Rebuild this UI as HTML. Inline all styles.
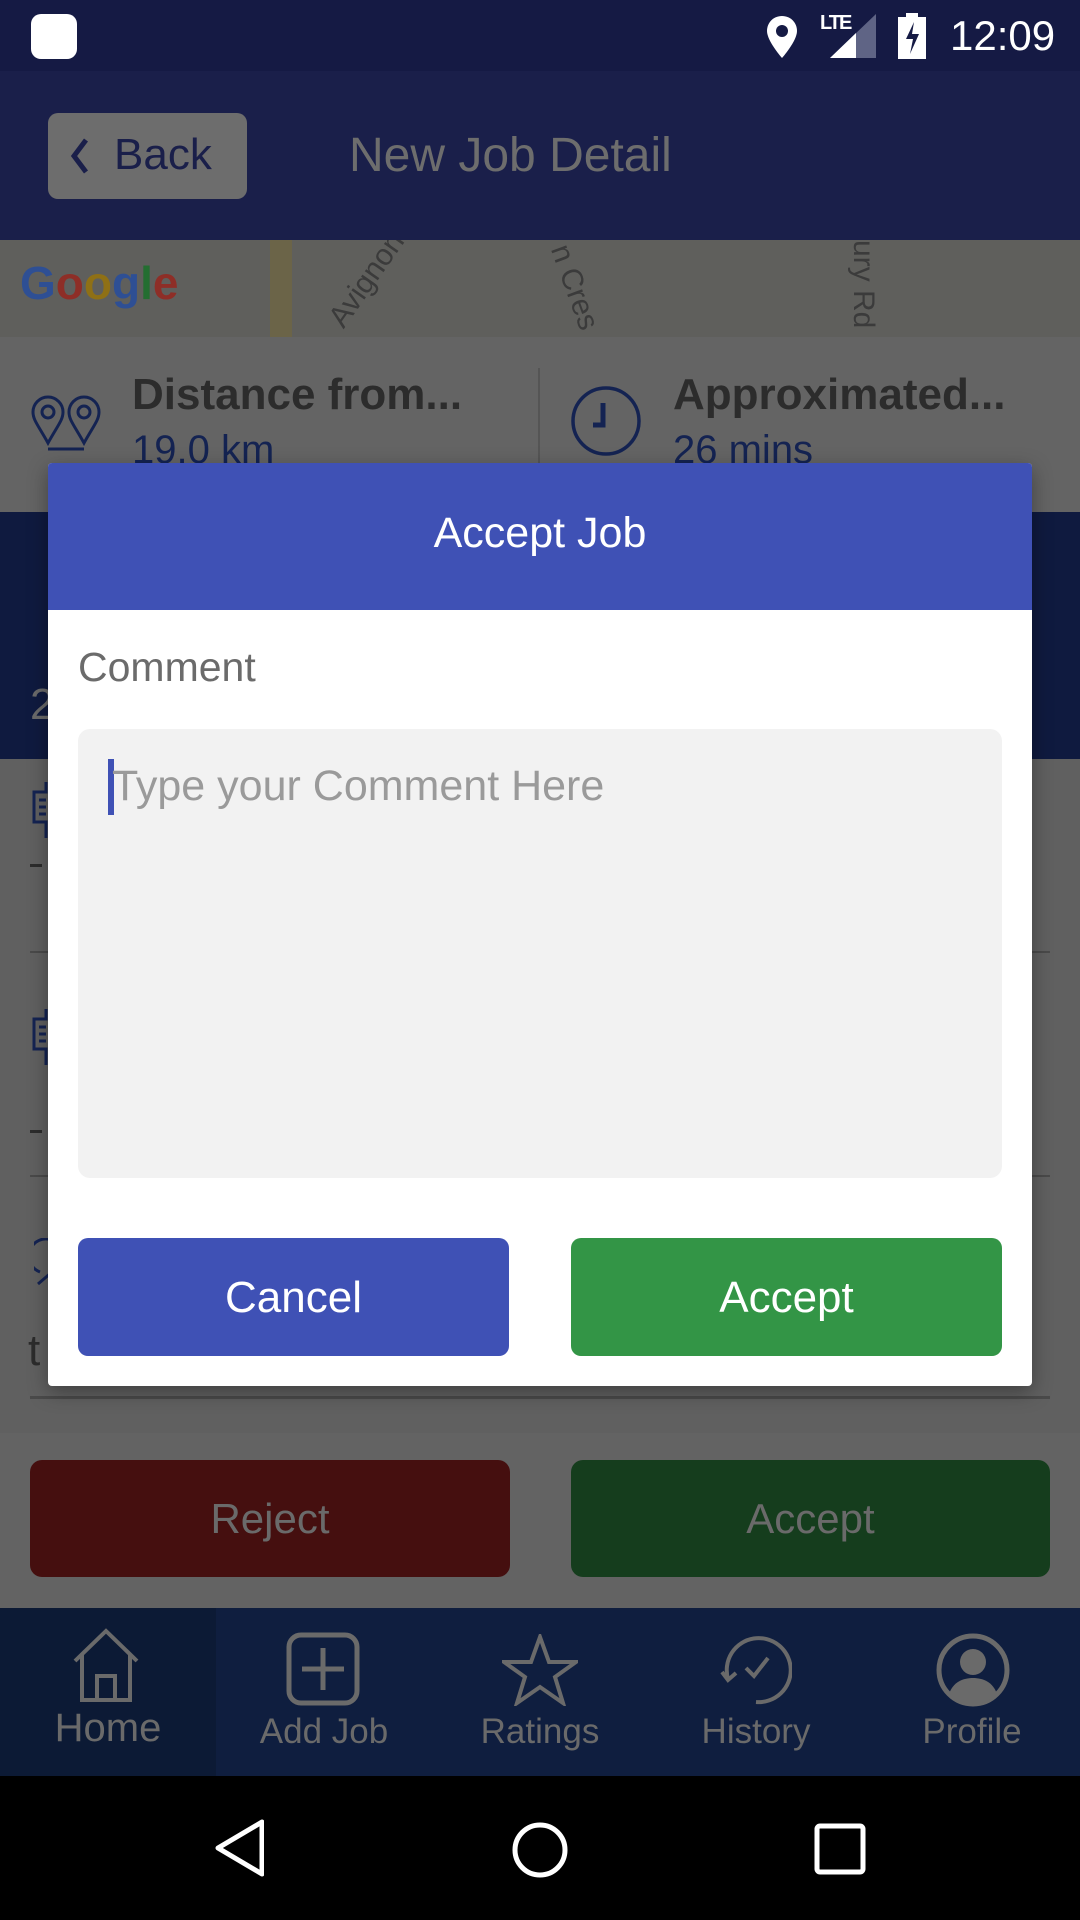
<!DOCTYPE html>
<html><head><meta charset="utf-8"><style>
*{margin:0;padding:0;box-sizing:border-box}
body{width:1080px;height:1920px;position:relative;overflow:hidden;background:#606060;font-family:"Liberation Sans",sans-serif}
.a{position:absolute}
.t{position:absolute;white-space:nowrap}
</style></head><body>
<!-- status bar -->
<div class="a" style="left:0;top:0;width:1080px;height:71px;background:#151a44"></div>
<div class="a" style="left:31px;top:14px;width:46px;height:45px;background:#fff;border-radius:10px"></div>
<svg class="a" style="left:764px;top:14px" width="36" height="46" viewBox="0 0 36 46"><path d="M18 2C9 2 3 9 3 17c0 10 15 27 15 27s15-17 15-27C33 9 27 2 18 2z" fill="#fff"/><circle cx="18" cy="17" r="6" fill="#151a44"/></svg>
<div class="t" style="left:820px;top:12px;color:#fff;font-size:20px;font-weight:bold;letter-spacing:-2px">LTE</div>
<svg class="a" style="left:830px;top:14px" width="46" height="44"><polygon points="0,44 46,0 46,44" fill="#5f6485"/><polygon points="0,44 26,19 26,44" fill="#fff"/></svg>
<svg class="a" style="left:898px;top:13px" width="28" height="46"><rect x="8" y="0" width="12" height="5" fill="#fff"/><rect x="0" y="4" width="28" height="42" fill="#fff"/><path d="M16 9 8 26h7l-3 15 9-20h-7z" fill="#151a44"/></svg>
<div class="t" style="left:950px;top:12px;color:#fff;font-size:42px">12:09</div>
<!-- header -->
<div class="a" style="left:0;top:71px;width:1080px;height:169px;background:#1a1f4a"></div>
<div class="a" style="left:48px;top:113px;width:199px;height:86px;background:#6d6d6d;border-radius:10px"></div>
<svg class="a" style="left:68px;top:136px" width="24" height="40"><path d="M18 4 6 20l12 16" stroke="#1a1f4a" stroke-width="5" fill="none"/></svg>
<div class="t" style="left:114px;top:130px;color:#1a1f4a;font-size:44px">Back</div>
<div class="t" style="left:349px;top:128px;color:#6d6d6d;font-size:48px">New Job Detail</div>
<!-- map -->
<div class="a" style="left:0;top:240px;width:1080px;height:97px;background:#5f5f5c;overflow:hidden">
 <div class="a" style="left:270px;top:0;width:22px;height:97px;background:#6b6448"></div>
 <div class="t" style="left:20px;top:16px;font-size:46px;font-weight:bold;color:#2e4f94">G<span style="color:#8e2e27">o</span><span style="color:#8f7015">o</span>g<span style="color:#246e31">l</span><span style="color:#8e2e27">e</span></div>
 <div class="t" style="left:350px;top:60px;font-size:30px;color:#3b3b3b;transform:rotate(-55deg);transform-origin:left bottom">Avignon Wa</div>
 <div class="t" style="left:575px;top:0;font-size:30px;color:#3b3b3b;transform:rotate(70deg);transform-origin:left top">n Cres</div>
 <div class="t" style="left:880px;top:0;font-size:30px;color:#3b3b3b;transform:rotate(90deg);transform-origin:left top">ury Rd</div>
</div>
<!-- info strip -->
<div class="a" style="left:0;top:337px;width:1080px;height:175px;background:#646464"></div>
<div class="a" style="left:538px;top:368px;width:2px;height:144px;background:#555"></div>
<svg class="a" style="left:28px;top:395px" width="76" height="60" fill="none" stroke="#142352" stroke-width="3"><path d="M20 48C10 30 5 25 5 17a15 15 0 0 1 30 0c0 8-5 13-15 31z"/><circle cx="20" cy="17" r="6"/><path d="M56 48C46 30 41 25 41 17a15 15 0 0 1 30 0c0 8-5 13-15 31z"/><circle cx="56" cy="17" r="6"/><path d="M20 54h36"/></svg>
<div class="t" style="left:132px;top:370px;color:#2c2c2c;font-size:44px;font-weight:bold">Distance from...</div>
<div class="t" style="left:132px;top:428px;color:#142352;font-size:40px">19.0 km</div>
<svg class="a" style="left:570px;top:385px" width="72" height="72" fill="none" stroke="#142352" stroke-width="3.5"><circle cx="36" cy="36" r="33"/><path d="M33 18v22h-10" stroke-width="5"/></svg>
<div class="t" style="left:673px;top:370px;color:#2c2c2c;font-size:44px;font-weight:bold">Approximated...</div>
<div class="t" style="left:673px;top:428px;color:#142352;font-size:40px">26 mins</div>
<!-- blue band -->
<div class="a" style="left:0;top:512px;width:1080px;height:247px;background:#0f1a3f"></div>
<div class="t" style="left:30px;top:680px;color:#6a6a6a;font-size:44px">2</div>
<!-- content icons -->
<svg class="a" style="left:30px;top:780px" width="30" height="60" fill="none" stroke="#142352" stroke-width="3"><path d="M16 2v10H4v30h12v16"/><path d="M9 20h7M9 27h7M9 34h7"/></svg>
<div class="a" style="left:30px;top:864px;width:12px;height:3px;background:#2c2c2c"></div>
<svg class="a" style="left:30px;top:1007px" width="30" height="60" fill="none" stroke="#142352" stroke-width="3"><path d="M16 2v10H4v30h12v16"/><path d="M9 20h7M9 27h7M9 34h7"/></svg>
<div class="a" style="left:30px;top:1130px;width:12px;height:3px;background:#2c2c2c"></div>
<svg class="a" style="left:34px;top:1238px" width="20" height="50" fill="none" stroke="#142352" stroke-width="3"><path d="M18 2A16 16 0 0 0 6 34M4 46l14-12"/></svg>
<div class="t" style="left:28px;top:1326px;color:#2c2c2c;font-size:44px">t</div>
<!-- content lines -->
<div class="a" style="left:30px;top:951px;width:1020px;height:2px;background:#4a4a4a"></div>
<div class="a" style="left:30px;top:1175px;width:1020px;height:2px;background:#4a4a4a"></div>
<div class="a" style="left:30px;top:1396px;width:1020px;height:3px;background:#4a4a4a"></div>
<div class="a" style="left:0;top:1433px;width:1080px;height:175px;background:#636363"></div>
<!-- bottom buttons -->
<div class="a" style="left:30px;top:1460px;width:480px;height:117px;background:#450f0f;border-radius:12px"></div>
<div class="t" style="left:30px;top:1495px;width:480px;text-align:center;color:#6a6a6a;font-size:42px">Reject</div>
<div class="a" style="left:571px;top:1460px;width:479px;height:117px;background:#153d1d;border-radius:12px"></div>
<div class="t" style="left:571px;top:1495px;width:479px;text-align:center;color:#6a6a6a;font-size:42px">Accept</div>
<!-- tab bar -->
<div class="a" style="left:0;top:1608px;width:1080px;height:168px;background:#0f1e3f"></div>
<div class="a" style="left:0;top:1608px;width:216px;height:168px;background:#0c1a35"></div>
<svg class="a" style="left:70px;top:1628px" width="72" height="76" fill="none" stroke="#6a6a6a" stroke-width="4"><path d="M5 33 36 3l31 30M12 27v45h48V27"/><path d="M27 72V48h18v24"/></svg>
<svg class="a" style="left:286px;top:1632px" width="76" height="76" fill="none" stroke="#6a6a6a" stroke-width="5"><rect x="3" y="3" width="68" height="68" rx="12"/><path d="M37 16v42M16 37h42"/></svg>
<svg class="a" style="left:502px;top:1634px" width="76" height="72" fill="none" stroke="#6a6a6a" stroke-width="4"><path d="M38 3l9 25h27l-21 15 8 26-23-16-23 16 8-26L2 28h27z"/></svg>
<svg class="a" style="left:720px;top:1634px" width="72" height="72" fill="none" stroke="#6a6a6a" stroke-width="4"><path d="M8 45A32 32 0 1 1 36 68"/><path d="M2 38l6 8 8-7"/><path d="M26 34l8 8 14-18"/></svg>
<svg class="a" style="left:935px;top:1632px" width="76" height="76"><circle cx="38" cy="38" r="34" fill="none" stroke="#6a6a6a" stroke-width="5"/><circle cx="38" cy="30" r="13" fill="#6a6a6a"/><path d="M14 62c4-12 14-16 24-16s20 4 24 16a34 34 0 0 1-48 0z" fill="#6a6a6a"/></svg>
<div class="t" style="left:0;top:1706px;width:216px;text-align:center;color:#6a6a6a;font-size:40px">Home</div>
<div class="t" style="left:216px;top:1712px;width:216px;text-align:center;color:#6a6a6a;font-size:35px">Add Job</div>
<div class="t" style="left:432px;top:1712px;width:216px;text-align:center;color:#6a6a6a;font-size:35px">Ratings</div>
<div class="t" style="left:648px;top:1712px;width:216px;text-align:center;color:#6a6a6a;font-size:35px">History</div>
<div class="t" style="left:864px;top:1712px;width:216px;text-align:center;color:#6a6a6a;font-size:35px">Profile</div>
<!-- system nav -->
<div class="a" style="left:0;top:1776px;width:1080px;height:144px;background:#000"></div>
<svg class="a" style="left:212px;top:1818px" width="52" height="60"><path d="M50 4 6 30l44 26z" fill="none" stroke="#fff" stroke-width="5" stroke-linejoin="round"/></svg>
<svg class="a" style="left:510px;top:1820px" width="60" height="60"><circle cx="30" cy="30" r="25" fill="none" stroke="#fff" stroke-width="5"/></svg>
<svg class="a" style="left:814px;top:1823px" width="52" height="52"><rect x="3" y="3" width="46" height="46" rx="3" fill="none" stroke="#fff" stroke-width="5"/></svg>
<!-- dialog -->
<div class="a" style="left:48px;top:463px;width:984px;height:923px;background:#fff;border-radius:4px;overflow:hidden;box-shadow:0 6px 20px rgba(0,0,0,.35)">
 <div class="a" style="left:0;top:0;width:984px;height:147px;background:#3f51b5"></div>
 <div class="t" style="left:0;top:46px;width:984px;text-align:center;color:#fff;font-size:43px">Accept Job</div>
 <div class="t" style="left:30px;top:181px;color:#6b6b6b;font-size:41px">Comment</div>
 <div class="a" style="left:30px;top:266px;width:924px;height:449px;background:#f2f2f2;border-radius:12px"></div>
 <div class="a" style="left:60px;top:296px;width:6px;height:56px;background:#3f51b5"></div>
 <div class="t" style="left:64px;top:299px;color:#9a9a9a;font-size:43px">Type your Comment Here</div>
 <div class="a" style="left:30px;top:775px;width:431px;height:118px;background:#3f51b5;border-radius:10px"></div>
 <div class="t" style="left:30px;top:810px;width:431px;text-align:center;color:#fff;font-size:44px">Cancel</div>
 <div class="a" style="left:523px;top:775px;width:431px;height:118px;background:#339546;border-radius:10px"></div>
 <div class="t" style="left:523px;top:810px;width:431px;text-align:center;color:#fff;font-size:44px">Accept</div>
</div>
</body></html>
